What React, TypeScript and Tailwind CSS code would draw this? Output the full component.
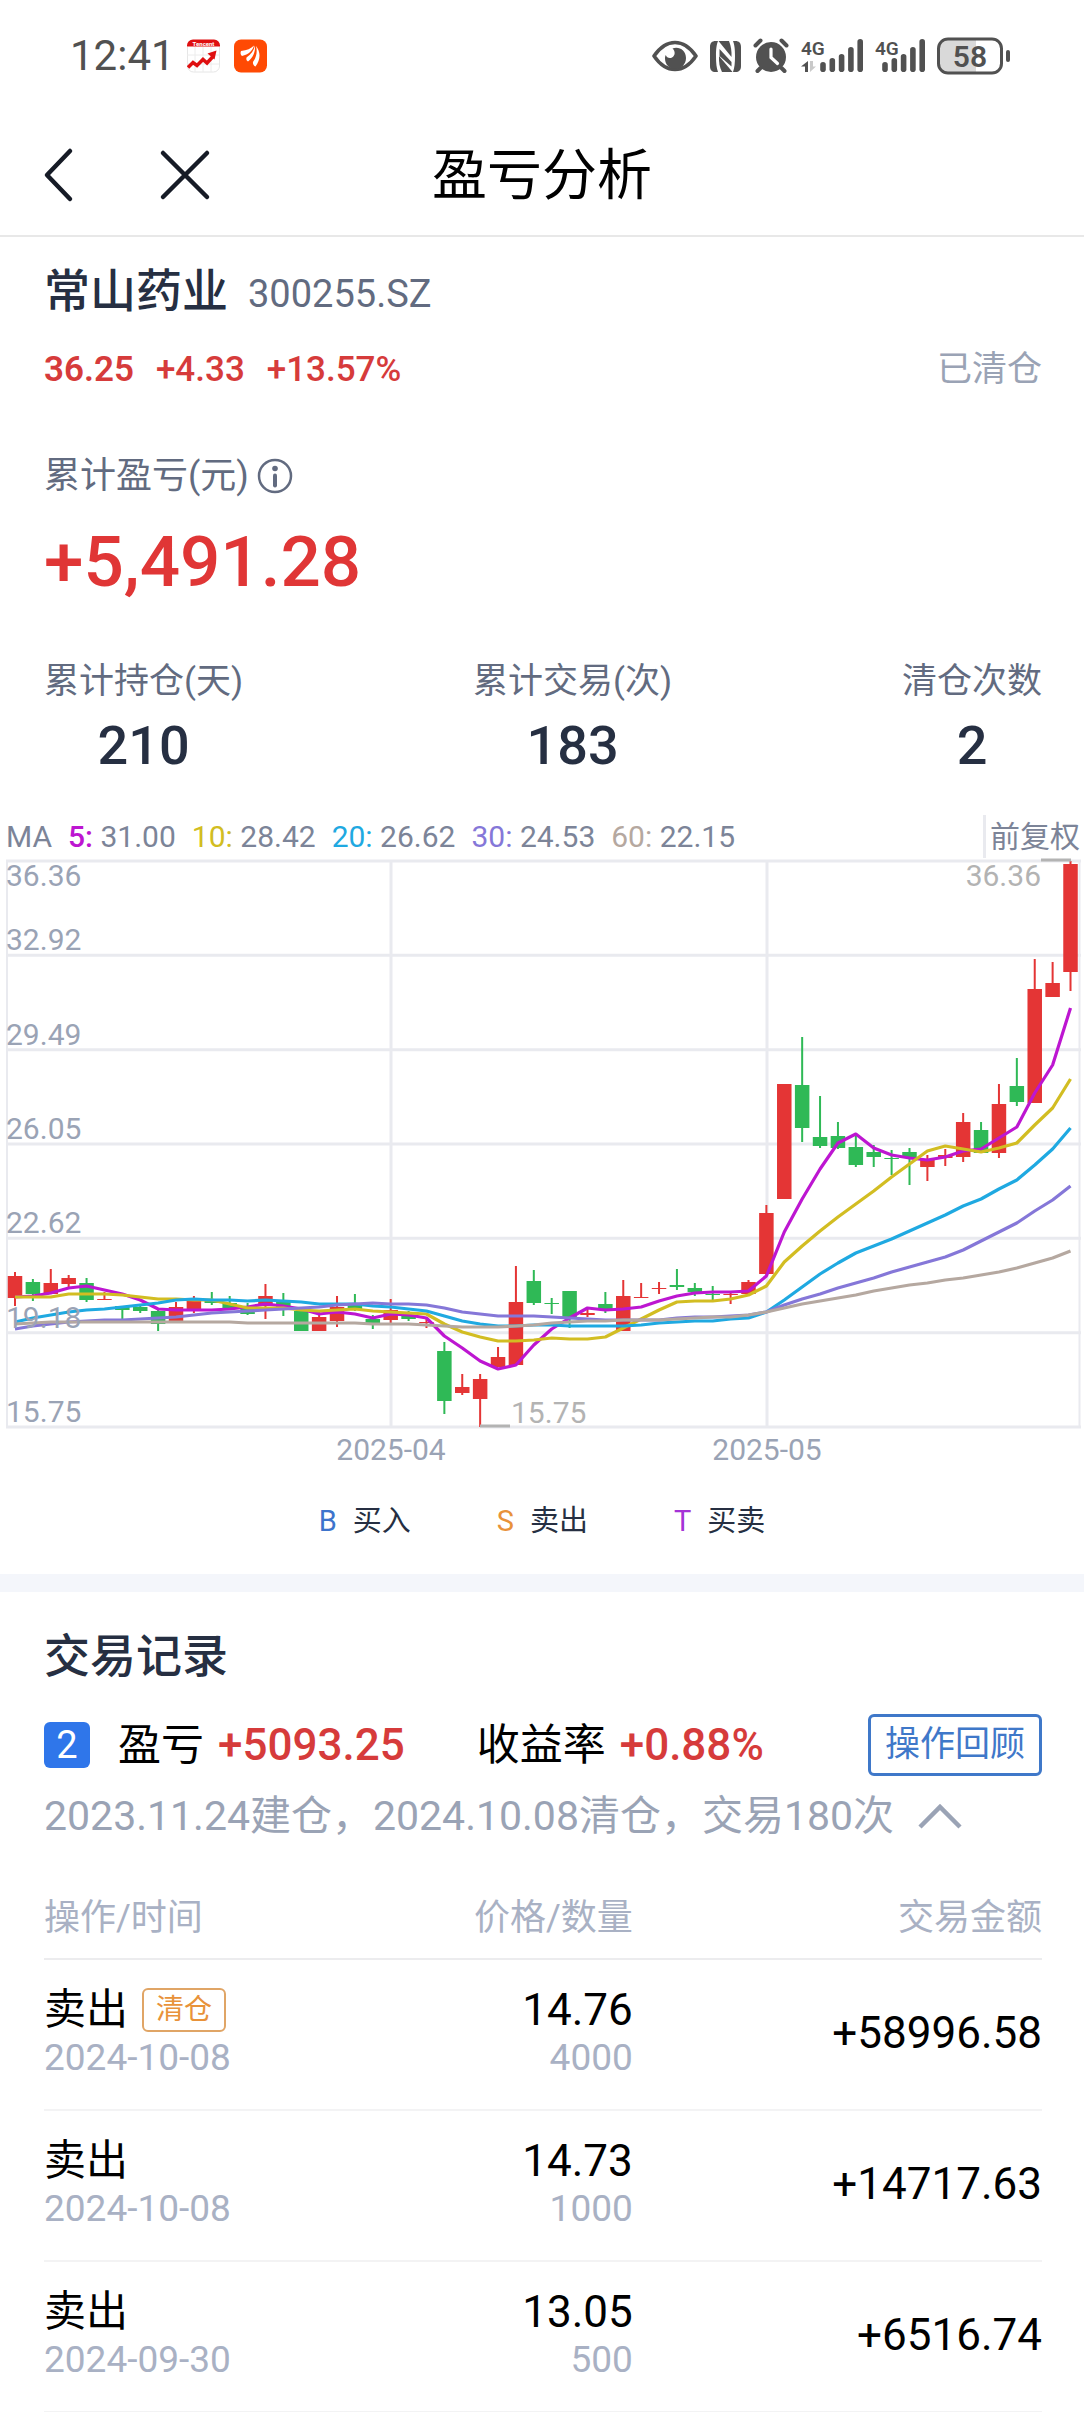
import React from "react";

// [direction, high, low, body top, body bottom] in chart units, 0 is the top grid line
type Candle = ["up" | "down", number, number, number, number];

const CANDLES: Candle[] = [
  ["up", 411, 445, 415, 437],
  ["down", 418, 440, 421, 433],
  ["up", 408, 433, 422, 433],
  ["up", 414, 427, 417, 423],
  ["down", 417, 441, 422, 439],
  ["up", 431, 439, 438, 439],
  ["down", 445, 458, 445, 449],
  ["down", 443, 452, 446, 450],
  ["down", 447, 470, 450, 463],
  ["up", 441, 461, 446, 460],
  ["up", 435, 452, 439, 448],
  ["down", 431, 444, 439, 442],
  ["down", 435, 447, 442, 447],
  ["down", 442, 454, 446, 453],
  ["up", 423, 458, 435, 445],
  ["down", 432, 455, 440, 447],
  ["down", 450, 470, 450, 470],
  ["up", 451, 470, 456, 470],
  ["up", 435, 466, 446, 460],
  ["down", 433, 450, 444, 449],
  ["down", 454, 468, 458, 462],
  ["up", 438, 462, 449, 459],
  ["down", 450, 460, 454, 458],
  ["up", 457, 467, 461, 462],
  ["down", 481, 553, 490, 540],
  ["up", 513, 534, 526, 532],
  ["up", 513, 566, 518, 538],
  ["up", 486, 506, 496, 506],
  ["up", 405, 504, 441, 504],
  ["down", 409, 444, 420, 442],
  ["down", 437, 453, 442, 443],
  ["down", 430, 467, 430, 456],
  ["up", 446, 456, 452, 454],
  ["down", 431, 452, 443, 449],
  ["up", 419, 470, 435, 470],
  ["up", 422, 437, 436, 437],
  ["up", 421, 433, 427, 428],
  ["down", 408, 429, 424, 426],
  ["down", 422, 435, 427, 431],
  ["down", 425, 441, 433, 434],
  ["up", 431, 443, 433, 434],
  ["up", 419, 433, 421, 433],
  ["up", 344, 414, 352, 413],
  ["up", 223, 338, 223, 338],
  ["down", 176, 281, 224, 267],
  ["down", 235, 287, 276, 285],
  ["down", 261, 288, 275, 287],
  ["down", 275, 306, 286, 304],
  ["down", 284, 306, 291, 296],
  ["down", 289, 314, 297, 298],
  ["down", 287, 324, 291, 297],
  ["up", 294, 320, 298, 306],
  ["up", 288, 305, 294, 297],
  ["up", 252, 301, 261, 296],
  ["down", 261, 292, 269, 292],
  ["up", 223, 297, 243, 292],
  ["down", 197, 245, 225, 241],
  ["up", 98, 242, 128, 242],
  ["up", 101, 136, 122, 136],
  ["up", 0, 130, 3, 111],
];

const MA_LINES = [
  {
    label: "5:",
    value: "31.00",
    color: "#bd16d1",
    text: "font-medium text-[#bd16d1]",
    points: [
      436, 435, 432, 427, 425, 429, 433, 439, 448, 449, 449, 449, 448, 446, 443, 445, 448, 453, 451, 453,
      457, 453, 454, 457, 475, 487, 500, 508, 504, 484, 468, 457, 447, 449, 448, 446, 440, 435, 432, 431,
      431, 430, 415, 371, 338, 308, 282, 273, 287, 294, 297, 299, 296, 290, 288, 277, 266, 232, 204, 147,
    ],
  },
  {
    label: "10:",
    value: "28.42",
    color: "#d2bd22",
    text: "text-[#d2bd22]",
    points: [
      436, 436, 436, 433, 433, 433, 434, 436, 438, 438, 439, 439, 443, 447, 447, 447, 449, 450, 449, 448,
      450, 451, 452, 453, 463, 471, 476, 480, 480, 479, 477, 478, 478, 476, 467, 458, 449, 441, 440, 440,
      438, 434, 425, 401, 385, 370, 356, 343, 330, 316, 303, 290, 285, 288, 291, 287, 282, 264, 247, 218,
    ],
  },
  {
    label: "20:",
    value: "26.62",
    color: "#1fa9e1",
    text: "text-[#1fa9e1]",
    points: [
      461, 457, 454, 451, 449, 448, 446, 444, 442, 439, 438, 439, 439, 440, 439, 440, 441, 443, 443, 443,
      445, 446, 448, 450, 455, 460, 463, 465, 465, 464, 464, 465, 465, 465, 465, 464, 462, 461, 460, 460,
      458, 457, 451, 439, 426, 413, 402, 392, 385, 378, 370, 362, 354, 345, 338, 328, 319, 304, 288, 267,
    ],
  },
  {
    label: "30:",
    value: "24.53",
    color: "#8577d8",
    text: "text-[#8577d8]",
    points: [
      468, 465, 463, 461, 460, 459, 459, 458, 457, 456, 454, 452, 451, 450, 449, 448, 447, 446, 444, 443,
      442, 443, 443, 444, 447, 451, 453, 455, 455, 455, 456, 457, 458, 459, 459, 459, 459, 457, 456, 456,
      455, 454, 451, 444, 438, 433, 427, 422, 417, 411, 406, 401, 396, 389, 380, 371, 362, 350, 339, 325,
    ],
  },
  {
    label: "60:",
    value: "22.15",
    color: "#b5a8a0",
    text: "text-[#b5a8a0]",
    points: [
      463, 462, 461, 461, 461, 461, 461, 461, 461, 461, 461, 461, 461, 462, 462, 462, 462, 462, 462, 462,
      463, 463, 463, 464, 465, 466, 466, 466, 465, 464, 462, 461, 460, 460, 459, 459, 459, 458, 457, 456,
      456, 454, 451, 447, 443, 440, 437, 434, 430, 427, 424, 422, 419, 417, 414, 411, 407, 402, 397, 390,
    ],
  },
];

const PRICE_LABELS = ["36.36", "32.92", "29.49", "26.05", "22.62", "19.18", "15.75"];
const MONTHS = [
  { label: "2025-04", x: 391 },
  { label: "2025-05", x: 767 },
];

const GRID_STEP = 94.33;
const CHART_HEIGHT = 566;

const candleX = (index: number) => 15 + index * 17.89;

const STATS = [
  { label: "累计持仓(天)", value: "210" },
  { label: "累计交易(次)", value: "183" },
  { label: "清仓次数", value: "2" },
];

const LEGEND = [
  { mark: "B", label: "买入", color: "text-[#3d74cc]" },
  { mark: "S", label: "卖出", color: "text-[#e8923a]" },
  { mark: "T", label: "买卖", color: "text-[#a433d6]" },
];

const TRADES = [
  { type: "卖出", tag: "清仓", date: "2024-10-08", price: "14.76", amount: "4000", total: "+58996.58" },
  { type: "卖出", date: "2024-10-08", price: "14.73", amount: "1000", total: "+14717.63" },
  { type: "卖出", date: "2024-09-30", price: "13.05", amount: "500", total: "+6516.74" },
];

// Tops of the five signal bars, left to right
const SIGNAL_TOPS = [24, 20, 16, 9, 1];

const SignalBars = ({ start }: { start: number }) => (
  <g stroke="#515151" strokeWidth="5.600" strokeLinecap="round">
    {SIGNAL_TOPS.map((top, i) => (
      <line key={top} x1={start + i * 9.3} x2={start + i * 9.3} y1={top + 2.8} y2={31.2} />
    ))}
  </g>
);

const StatusBar = () => (
  <div className="flex h-28 items-center justify-between pl-[70px] pr-[74px] text-[#515151]">
    <div className="flex items-center">
      <span className="text-[42px] leading-12">12:41</span>
      {/* Stock app notification */}
      <svg className="ml-3 h-9 w-[33px]" viewBox="0 0 33 36" aria-hidden="true">
        <path d="M0.500 9V28a6 6 0 0 0 6 6H26.500a6 6 0 0 0 6-6V9" fill="#fff" stroke="#e6e6e6" />
        <path d="M8 9v25M16 9v25M24 9v25M0 17h32M0 26h32" stroke="#ececec" />
        <path d="M0 8.500V7.500a6 6 0 0 1 6-6H27a6 6 0 0 1 6 6V8.500z" fill="#df0f10" />
        <text x="16.500" y="7.500" fontSize="6" fontWeight="700" textAnchor="middle" fill="#fff">
          Tencent
        </text>
        <path d="M1 29.500l5-5 4 3 6-6 4 3.500 6-6.500" fill="none" stroke="#df0f10" strokeWidth="3.500" />
        <path d="M20.500 15.500L29.500 12.500 27.500 21.500z" fill="#df0f10" />
      </svg>
      {/* Brokerage app notification */}
      <svg className="ml-3.5 h-9 w-[33px]" viewBox="0 0 33 36" aria-hidden="true">
        <rect y="1.500" width="33" height="33" rx="7" fill="#ff4a04" />
        <path d="M7 13c6-.5 10-2.500 13-5.500-1.500 5.500-5.500 9-12 10.500-1.500-1-1.800-3.300-1-5z" fill="#fff" />
        <path d="M21 7.500c.5 6.500-2 12-7 16-1.500-.7-2-2.200-1.500-4C17 16.500 20 12.500 21 7.500z" fill="#fff" />
        <path d="M22 8c4.500 5.500 5 13-.5 20.500-1.700-.8-2.800-2.500-2.500-4.500C22.500 19 23.500 13.500 22 8z" fill="#fff" />
      </svg>
    </div>

    <div className="flex items-center gap-3">
      {/* Eye comfort */}
      <svg className="h-9 w-[46px]" viewBox="0 0 46 36" aria-hidden="true">
        <path
          d="M2 18C8.500 8.500 15 4.500 23 4.500S37.500 8.500 44 18C37.500 27.500 31 31.500 23 31.500S8.500 27.500 2 18z"
          fill="none"
          stroke="#515151"
          strokeWidth="3.600"
          strokeLinejoin="round"
        />
        <path
          d="M20.500 10.500C27 8 34 12.500 34 20c0 6-4.500 11-10.500 11S13 26.500 13 20.500c0-1.500.3-2.500.8-3.500.7 2.500 3.700 4 6.200 2.500 3.500-2 3.500-6.500.5-9z"
          fill="#515151"
        />
      </svg>
      {/* NFC */}
      <svg className="h-9 w-[31px]" viewBox="0 0 31 36" fill="#515151" aria-hidden="true">
        <path d="M5.500 3C2 3 0 5 0 9V28c0 4 2 6 5.500 6H8C6.500 30 6 25 6 18S6.500 7 8 3z" />
        <path d="M25.500 3c3.500 0 5.500 2 5.500 6V28c0 4-2 6-5.500 6H23c1.500-4 2-9 2-16s-.5-11-2-15z" />
        <path d="M8.500 3H19c2 5 2.800 10 2.500 16z" />
        <path d="M9.500 11L21.500 24v4.500L9.500 18z" />
        <path d="M9 18L22.500 34H12C9.500 29 8.700 24 9 18z" />
      </svg>
      {/* Alarm */}
      <svg className="h-9 w-9" viewBox="0 0 36 36" aria-hidden="true">
        <circle cx="18" cy="19" r="15" fill="#515151" />
        <path d="M2.500 7.500l5-5M33.500 7.500l-5-5M7.500 30l-3 3M28.500 30l3 3" stroke="#515151" strokeWidth="4" strokeLinecap="round" />
        <path d="M18 11v8.500l6.500 6" fill="none" stroke="#fff" strokeWidth="3.200" strokeLinecap="round" />
      </svg>
      {/* First SIM */}
      <svg className="h-9 w-[62px]" viewBox="0 0 62 36" aria-hidden="true">
        <text x="0" y="17" fontSize="19" fontWeight="600" fill="#515151">
          4G
        </text>
        <path d="M7 23v11H4v-5.500H0z" fill="#515151" />
        <path d="M9 23v11l6-5.500H12V23z" fill="#c9c9c9" />
        <SignalBars start={22} />
      </svg>
      {/* Second SIM */}
      <svg className="h-9 w-[50px]" viewBox="0 0 50 36" aria-hidden="true">
        <text x="0" y="17" fontSize="19" fontWeight="600" fill="#515151">
          4G
        </text>
        <SignalBars start={10} />
      </svg>
      {/* Battery */}
      <svg className="h-[38px] w-[73px]" viewBox="0 0 73 38" aria-hidden="true">
        <path d="M11 2h28v34H11a9 9 0 0 1-9-9V11a9 9 0 0 1 9-9z" fill="#d9d9d9" />
        <rect x="1.500" y="2" width="63" height="34" rx="9.500" fill="none" stroke="#515151" strokeWidth="3" />
        <rect x="69" y="13" width="4" height="12" rx="2" fill="#515151" />
        <text x="33" y="30" fontSize="30" fontWeight="600" textAnchor="middle" fill="#515151">
          58
        </text>
      </svg>
    </div>
  </div>
);

const NavBar = () => (
  <header className="grid h-[125px] grid-cols-3 items-center border-b-2 border-[#e8e8e8] px-[42px] pt-0.5">
    <div className="flex items-center gap-[82px]">
      <button type="button" aria-label="返回">
        <svg className="h-14 w-8" viewBox="0 0 32 56" fill="none" stroke="#161b26" strokeWidth="4.500">
          <path d="M28 4L5 28l23 24" strokeLinecap="round" strokeLinejoin="round" />
        </svg>
      </button>
      <button type="button" aria-label="关闭">
        <svg className="h-14 w-14" viewBox="0 0 56 56" fill="none" stroke="#161b26" strokeWidth="4.500">
          <path d="M7 6l44 44M51 6L7 50" strokeLinecap="round" />
        </svg>
      </button>
    </div>
    <h1 className="whitespace-nowrap text-center text-[55px] leading-16 text-black">盈亏分析</h1>
  </header>
);

const StockSummary = () => (
  <section className="pt-6 pr-[42px] pl-11">
    <div className="flex items-baseline gap-5 leading-[60px]">
      <h2 className="text-[46px] font-medium text-[#262f42]">常山药业</h2>
      <span className="text-[38px] text-[#626b80]">300255.SZ</span>
    </div>
    <div className="mt-[22px] flex items-center text-[35px] leading-12">
      <div className="flex gap-[22px] font-medium text-[#d63b3b]">
        <span className="font-semibold">36.25</span>
        <span>+4.33</span>
        <span>+13.57%</span>
      </div>
      <span className="ml-auto text-[#9aa3b5]">已清仓</span>
    </div>

    <div className="mt-[58px] flex items-center gap-2 text-[36px] leading-12 text-[#626b80]">
      累计盈亏(元)
      <button type="button" aria-label="累计盈亏说明">
        <svg className="h-9 w-9" viewBox="0 0 36 36" fill="none" stroke="#626b80">
          <circle cx="18" cy="18" r="16" strokeWidth="2.500" />
          <circle cx="18" cy="10.500" r="2.800" fill="#626b80" stroke="none" />
          <path d="M18 17.500v10" strokeWidth="4" strokeLinecap="round" />
        </svg>
      </button>
    </div>
    <div className="mt-[22px] text-[71px] font-medium leading-20 text-[#e03636]">+5,491.28</div>

    <dl className="mt-14 flex justify-between text-center">
      {STATS.map((stat) => (
        <div key={stat.label}>
          <dt className="text-[35px] leading-12 text-[#626b80]">{stat.label}</dt>
          <dd className="mt-2 text-[54px] font-medium leading-16 text-[#262f42]">{stat.value}</dd>
        </div>
      ))}
    </dl>
  </section>
);

const PriceChart = () => (
  <section className="mt-[37px]">
    <div className="flex h-[43px] items-center justify-between pr-1 pl-1.5 text-[30px] leading-10 text-[#7c8498]">
      <div className="flex gap-4">
        <span>MA</span>
        {MA_LINES.map((line) => (
          <span key={line.label}>
            <span className={line.text}>{line.label}</span> {line.value}
          </span>
        ))}
      </div>
      <button type="button" className="h-full border-l-3 border-[#e9eaef] pl-1">
        前复权
      </button>
    </div>

    <svg className="block w-full" viewBox="0 -3 1084 611" role="img" aria-label="K线图" fontSize="30">
      <g stroke="#e9eaef" strokeWidth="3">
        {PRICE_LABELS.map((label, i) => (
          <line key={label} x1="6" x2="1081" y1={i * GRID_STEP} y2={i * GRID_STEP} />
        ))}
        {MONTHS.map((month) => (
          <line key={month.label} x1={month.x} x2={month.x} y1="0" y2={CHART_HEIGHT} />
        ))}
        <path d={`M7 0V${CHART_HEIGHT}M1079.500 0V${CHART_HEIGHT}`} strokeWidth="2" />
      </g>

      {CANDLES.map(([direction, high, low, top, bottom], i) => (
        <g key={i} fill={direction === "up" ? "#e43535" : "#2fb956"}>
          <rect x={candleX(i) - 1} y={high} width="2" height={low - high} />
          <rect x={candleX(i) - 7.25} y={top} width="14.500" height={bottom - top} />
        </g>
      ))}

      {MA_LINES.map((line) => (
        <polyline
          key={line.label}
          points={line.points.map((y, i) => `${candleX(i)},${y}`).join(" ")}
          fill="none"
          stroke={line.color}
          strokeWidth="3.200"
          strokeLinejoin="round"
        />
      ))}

      <g fill="#9aa3b5">
        {PRICE_LABELS.map((label, i) => (
          <text key={label} x="6" y={i === 0 ? 25 : i * GRID_STEP - 5}>
            {label}
          </text>
        ))}
        {MONTHS.map((month) => (
          <text key={month.label} x={month.x} y="599" textAnchor="middle">
            {month.label}
          </text>
        ))}
      </g>

      {/* Highest and lowest price in range */}
      <path d="M1041 -1H1071M480 565H510" stroke="#b3b3b3" strokeWidth="3" />
      <g fill="#b3b3b3">
        <text x="1041" y="25" textAnchor="end">
          36.36
        </text>
        <text x="511" y="562">
          15.75
        </text>
      </g>
    </svg>

    <ul className="mt-7 mb-[29px] flex justify-center gap-[86px] text-[29px] leading-12 text-[#262f42]">
      {LEGEND.map((item) => (
        <li key={item.mark} className="flex gap-4">
          <span className={item.color}>{item.mark}</span>
          {item.label}
        </li>
      ))}
    </ul>
  </section>
);

const TradeRecords = () => (
  <section className="pt-[34px] pr-[42px] pl-11">
    <h2 className="text-[46px] font-medium leading-[60px] text-[#262f42]">交易记录</h2>

    <div className="mt-7 flex items-center text-[43px] leading-14 whitespace-nowrap text-black">
      <span className="h-[46px] w-[46px] rounded-md bg-[#2f76ea] text-center text-[38px] leading-[46px] text-white">
        2
      </span>
      <span className="ml-7">盈亏</span>
      <span className="ml-3.5 text-[44px] font-medium text-[#d63b3b]">+5093.25</span>
      <span className="ml-[72px]">收益率</span>
      <span className="ml-3.5 text-[44px] font-medium text-[#d63b3b]">+0.88%</span>
      <button
        type="button"
        className="ml-auto h-[62px] rounded-md border-3 border-[#3f78c9] px-3.5 text-[35px] leading-14 text-[#3f78c9]"
      >
        操作回顾
      </button>
    </div>

    <div className="mt-3 flex items-center gap-[22px] text-[41px] leading-14 whitespace-nowrap text-[#9aa3b5]">
      2023.11.24建仓，2024.10.08清仓，交易180次
      <button type="button" aria-label="收起">
        <svg className="h-8 w-12" viewBox="0 0 48 32" fill="none" stroke="#9aa3b5" strokeWidth="4.500">
          <path d="M4 27L24 7l20 20" />
        </svg>
      </button>
    </div>

    <table className="mt-[33px] w-full table-fixed">
      <thead>
        <tr className="h-[82px] border-b-2 border-[#ececee] text-[36px] leading-12 text-[#a9b1c4]">
          <th className="w-[30%] text-left font-normal">操作/时间</th>
          <th className="w-[29%] text-right font-normal">价格/数量</th>
          <th className="text-right font-normal">交易金额</th>
        </tr>
      </thead>
      <tbody className="text-[44px] leading-12 text-black">
        {TRADES.map((trade) => (
          <tr key={trade.total} className="border-b-2 border-[#f3f3f4]">
            <td className="pt-[26px] pb-[27px]">
              <div className="flex items-center gap-3.5 text-[42px]">
                {trade.type}
                {trade.tag && (
                  <span className="rounded-md border-2 border-[#e0a566] px-3 text-[28px] leading-10 text-[#e8923a]">
                    {trade.tag}
                  </span>
                )}
              </div>
              <div className="text-[37px] text-[#a9b1c4]">{trade.date}</div>
            </td>
            <td className="pb-px text-right">
              <div>{trade.price}</div>
              <div className="text-[37px] text-[#a9b1c4]">{trade.amount}</div>
            </td>
            <td className="pb-1 text-right">{trade.total}</td>
          </tr>
        ))}
      </tbody>
    </table>
  </section>
);

export default function App() {
  return (
    <main className="w-full overflow-hidden bg-white font-[Roboto,'Noto_Sans_CJK_SC',sans-serif]">
      <StatusBar />
      <NavBar />
      <StockSummary />
      <PriceChart />
      <div className="h-[18px] bg-[#f4f6fb]" />
      <TradeRecords />
    </main>
  );
}
